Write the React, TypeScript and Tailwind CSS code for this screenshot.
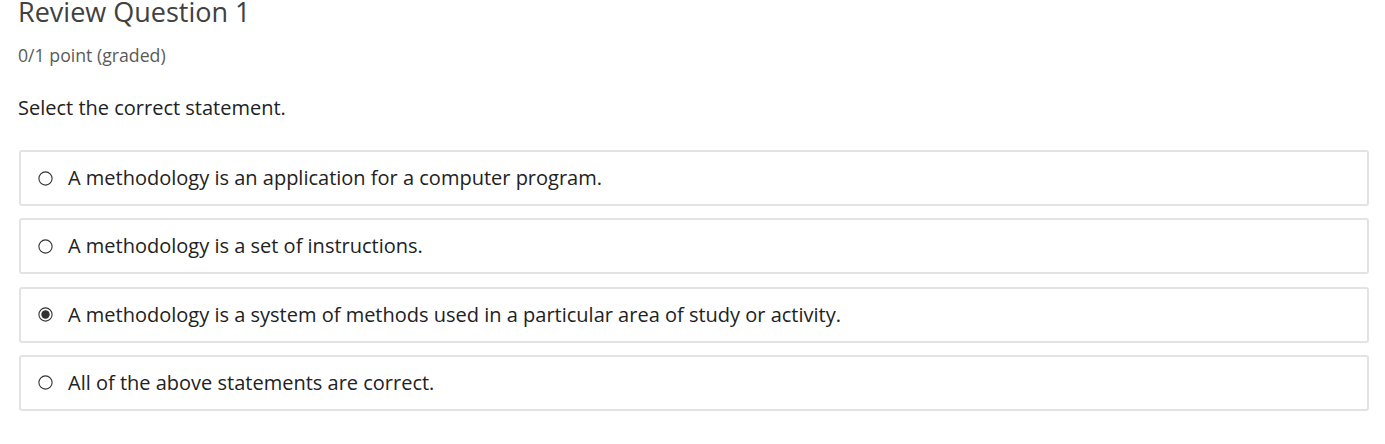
import React from "react";

const options = [
  { text: "A methodology is an application for a computer program.", checked: false },
  { text: "A methodology is a set of instructions.", checked: false },
  { text: "A methodology is a system of methods used in a particular area of study or activity.", checked: true },
  { text: "All of the above statements are correct.", checked: false },
];

function Radio({ checked }: { checked: boolean }) {
  return (
    <svg width="15" height="15" viewBox="0 0 15 15" className="shrink-0">
      <circle cx="7.5" cy="7.5" r="6.6" fill="white" stroke="#333" strokeWidth="1.1" />
      {checked && <circle cx="7.5" cy="7.5" r="4.2" fill="#333" />}
    </svg>
  );
}

export default function App() {
  return (
    <div className="bg-white w-[1385px] h-[444px] overflow-hidden" style={{ fontFamily: '"Open Sans", sans-serif' }}>
      <div className="pl-[18px] pr-[16px]">
        <h2 className="text-[27px] leading-[28px] text-[#414141] mt-[-2px] font-normal">Review Question 1</h2>
        <div className="mt-[18px] text-[17.7px] leading-[22px] text-[#5a5a5a]">0/1 point (graded)</div>
        <p className="mt-[29px] text-[20px] leading-[26px] text-[#222]">Select the correct statement.</p>
        <div className="mt-[29px] flex flex-col gap-[12.33px] ml-[1px]">
          {options.map((o, i) => (
            <label
              key={i}
              className="flex items-center h-[56px] border-2 border-[#e3e3e3] rounded-[3px] pl-[17px] gap-[15px]"
            >
              <Radio checked={o.checked} />
              <span className="text-[20px] text-[#222] leading-[26px]">{o.text}</span>
            </label>
          ))}
        </div>
      </div>
    </div>
  );
}
